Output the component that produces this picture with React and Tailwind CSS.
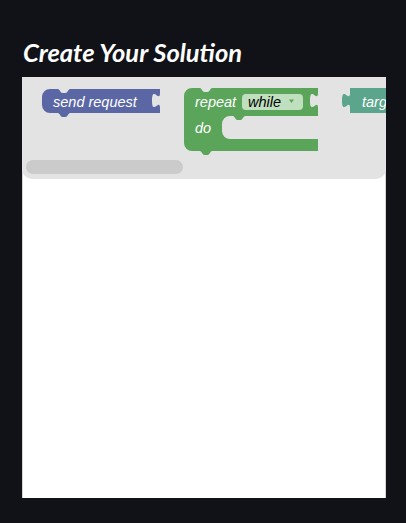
import React from 'react';

// notch helpers (12px wide, 4px deep)
const notchR = 'c1.5,0 2.5,4 4.5,4 h3 c2,0 3,-4 4.5,-4';
const notchL = 'c-1.5,0 -2.5,4 -4.5,4 h-3 c-2,0 -3,-4 -4.5,-4';
const tabIn = 'c0,10 -8,-8 -8,7.5 s8,-2.5 8,7.5';

function Workspace() {
  return (
    <svg
      width="364"
      height="102"
      viewBox="0 0 364 102"
      className="block italic text-[14.5px] font-['Liberation_Sans',Arial,sans-serif]"
    >
      {/* send request */}
      <path
        d={`M20,20 a8,8 0 0 1 8,-8 H36 ${notchR} H138 v4 ${tabIn} V36 H48 ${notchL} H28 a8,8 0 0 1 -8,-8 Z`}
        fill="#5b67a5"
      />
      <text x="31" y="30" fill="#fff">send request</text>

      {/* repeat while */}
      <path
        d={`M162,19 a8,8 0 0 1 8,-8 H178 ${notchR} H296 v5 ${tabIn} V39 H223 ${notchL} H208 a8,8 0 0 0 -8,8 V54 a8,8 0 0 0 8,8 H296 V74 H190 ${notchL} H170 a8,8 0 0 1 -8,-8 Z`}
        fill="#5ba55b"
      />
      <text x="173" y="30" fill="#fff">repeat</text>
      <rect x="220" y="17" width="61" height="16" rx="4" fill="#bfdfbe" />
      <text x="226" y="30" fill="#000">while</text>
      <path d="M267,22.5 h5 l-2.5,3.5 Z" fill="#5ba55b" />
      <text x="173" y="56" fill="#fff">do</text>

      {/* target, cut by the workspace edge */}
      <path
        d="M328,11 H400 V36 H328 V31 c0,-10 -8,8 -8,-7.5 s8,2.5 8,-7.5 V11 Z"
        fill="#5ba58c"
      />
      <text x="340" y="30" fill="#fff">target</text>

      {/* horizontal scrollbar */}
      <rect x="4" y="83" width="157" height="14" rx="7" fill="#cbcbcb" />
    </svg>
  );
}

export default function App() {
  return (
    <div className="min-h-screen bg-[#111217] px-[22px] pt-[36px]">
      <h2 className="text-[25.5px] leading-[32px] font-bold italic text-white pl-[1px] mb-[9px] font-['Lato','Open_Sans',sans-serif]">
        Create Your Solution
      </h2>
      <div className="w-[364px] h-[421px] bg-white border-x border-[#d6d6d6]">
        <div className="bg-[#e3e3e3] rounded-b-[10px] overflow-hidden -mx-px">
          <Workspace />
        </div>
      </div>
    </div>
  );
}
